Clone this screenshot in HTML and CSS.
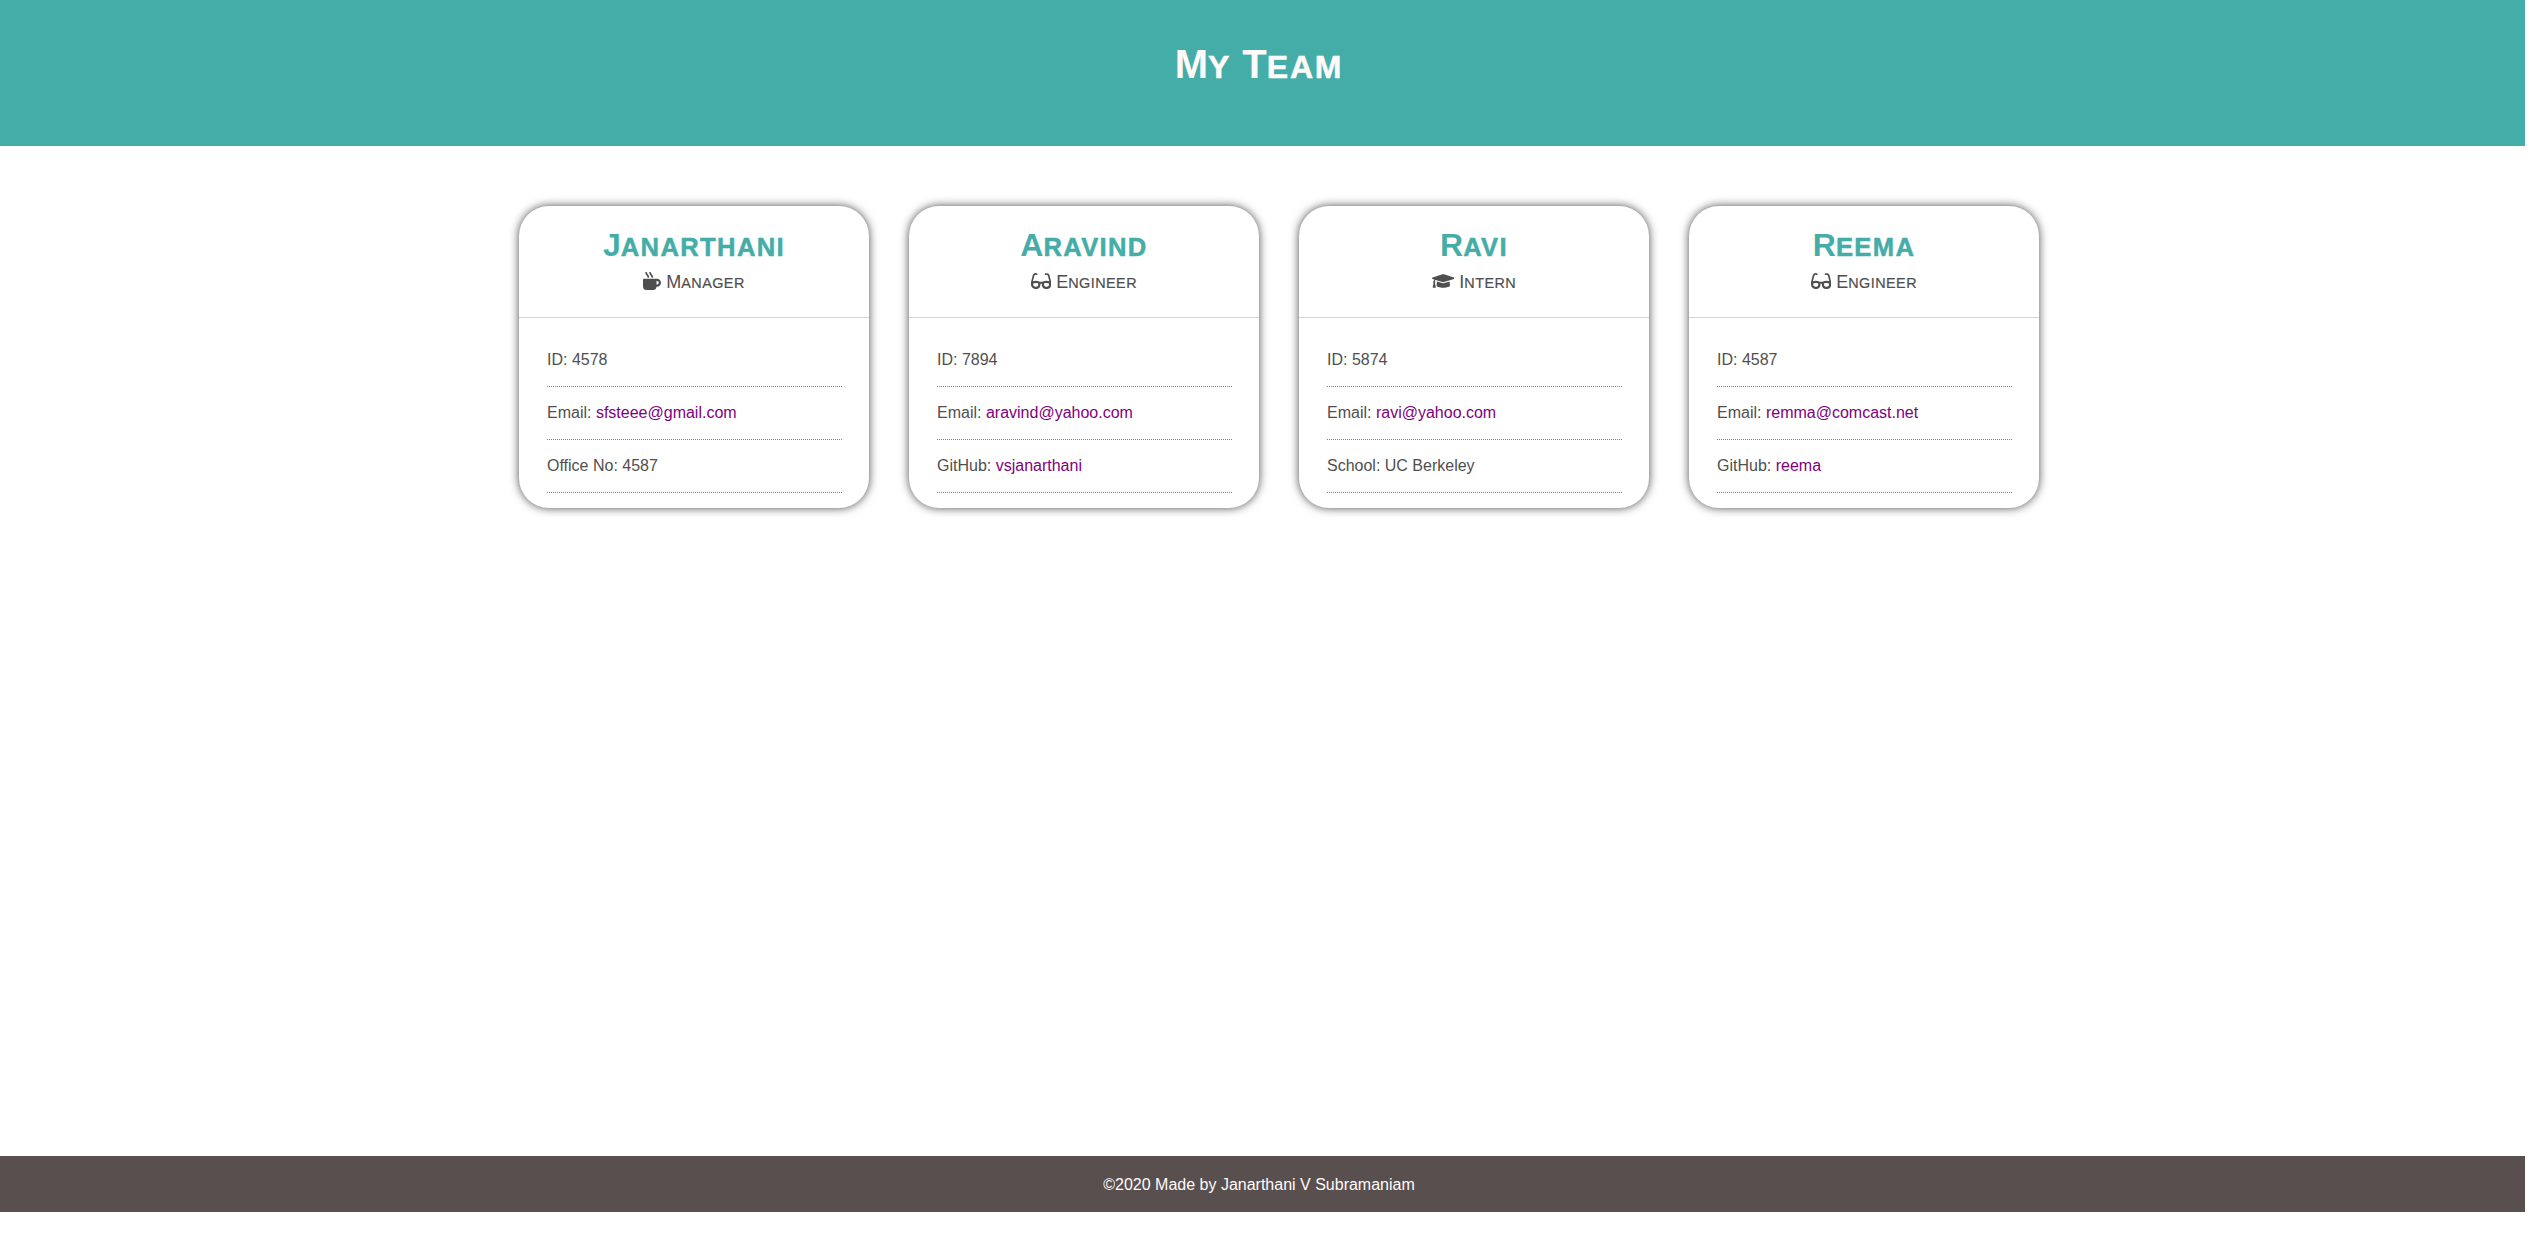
FILE: index.html
```html
<!DOCTYPE html>
<html lang="en">
<head>
<meta charset="utf-8">
<title>My Team</title>
<link rel="stylesheet" href="styles.css">
</head>
<body>
<svg class="sprite" aria-hidden="true">
  <symbol id="mug" viewBox="0 0 512 512"><path d="M127.1 146.5c1.3 7.7 8 13.5 16 13.5h16.5c9.8 0 17.6-8.5 16.3-18-3.8-28.2-16.4-54.2-36.6-74.7-14.4-14.7-23.6-33.3-26.4-53.5C111.8 5.9 105 0 96.8 0H80.4C70.6 0 63 8.5 64.1 18c3.9 31.9 18 61.3 40.6 84.4 12 12.2 19.7 27.5 22.4 44.1zm112 0c1.3 7.7 8 13.5 16 13.5h16.5c9.8 0 17.6-8.5 16.3-18-3.8-28.2-16.4-54.2-36.6-74.7-14.4-14.7-23.6-33.3-26.4-53.5C223.8 5.9 217 0 208.8 0h-16.4c-9.8 0-17.5 8.5-16.3 18 3.9 31.9 18 61.3 40.6 84.4 12 12.2 19.7 27.5 22.4 44.1zM400 192H32c-17.7 0-32 14.3-32 32v192c0 53 43 96 96 96h192c53 0 96-43 96-96h16c61.8 0 112-50.2 112-112s-50.2-112-112-112zm0 160h-16v-96h16c26.5 0 48 21.5 48 48s-21.5 48-48 48z"/></symbol>
  <symbol id="glasses" viewBox="0 0 576 512"><path d="M574.1 280.37L528.75 98.66c-5.91-23.7-21.59-44.05-43-55.81-21.44-11.73-46.97-14.11-70.19-6.33l-15.25 5.08c-8.39 2.79-12.92 11.86-10.12 20.24l5.06 15.18c2.79 8.38 11.85 12.91 20.23 10.12l13.18-4.39c10.87-3.62 23-3.57 33.16 1.73 10.29 5.37 17.57 14.56 20.37 25.82l38.46 153.82c-22.19-6.81-49.79-12.46-81.2-12.46-34.77 0-73.98 7.02-114.85 26.74h-73.18c-40.87-19.74-80.08-26.75-114.86-26.75-31.42 0-59.02 5.65-81.21 12.46l38.46-153.83c2.79-11.25 10.09-20.45 20.38-25.81 10.16-5.3 22.28-5.35 33.15-1.73l13.17 4.39c8.38 2.79 17.44-1.74 20.23-10.12l5.06-15.18c2.8-8.38-1.73-17.45-10.12-20.24l-15.25-5.08c-23.22-7.78-48.75-5.41-70.19 6.33-21.41 11.77-37.09 32.11-43 55.8L1.9 280.37A64.218 64.218 0 0 0 0 295.86v70.25C0 429.01 51.58 480 115.2 480h37.12c60.28 0 110.37-45.94 114.88-105.37l2.93-38.63h35.75l2.93 38.63C313.31 434.06 363.4 480 423.68 480h37.12c63.62 0 115.2-50.99 115.2-113.88v-70.25c0-5.23-.64-10.43-1.9-15.5zm-370.72 89.42c-1.97 25.91-24.4 46.21-51.06 46.21H115.2C86.97 416 64 393.62 64 366.11v-37.54c18.12-6.49 43.42-12.92 72.58-12.92 23.86 0 47.26 4.33 69.93 12.92l-3.13 41.22zM512 366.12c0 27.51-22.97 49.88-51.2 49.88h-37.12c-26.67 0-49.1-20.3-51.06-46.21l-3.13-41.22c22.67-8.59 46.08-12.92 69.95-12.92 29.12 0 54.43 6.44 72.55 12.93v37.54z"/></symbol>
  <symbol id="cap" viewBox="0 0 640 512"><path d="M622.34 153.2L343.4 67.5c-15.2-4.67-31.6-4.67-46.79 0L17.66 153.2c-23.54 7.23-23.54 38.36 0 45.59l48.63 14.94c-10.67 13.19-17.23 29.28-17.88 46.9C38.78 266.15 32 276.11 32 288c0 10.78 5.68 19.85 13.86 25.65L20.33 428.53C18.11 438.52 25.71 448 35.94 448h56.11c10.24 0 17.84-9.48 15.62-19.47L82.14 313.65C90.32 307.85 96 298.78 96 288c0-11.57-6.47-21.25-15.66-26.87.76-15.02 8.44-28.3 20.69-36.72L296.6 284.5c9.06 2.78 26.44 6.25 46.79 0l278.95-85.7c23.55-7.24 23.55-38.36 0-45.6zM352.79 315.09c-28.53 8.76-52.84 3.92-65.59 0l-145.02-44.55L128 384c0 35.35 85.96 64 192 64s192-28.65 192-64l-14.18-113.47-145.03 44.56z"/></symbol>
</svg>
<div class="page">
  <header class="header"><h1 class="title">M<span class="sc">y</span> T<span class="sc">eam</span></h1></header>
  <main class="team">
    <section class="card">
      <div class="card-head">
        <h2 class="name">J<span class="sc">anarthani</span></h2>
        <p class="role"><svg class="icon icon-mug"><use href="#mug"/></svg> M<span class="sc">anager</span></p>
      </div>
      <ul class="details">
        <li class="detail">ID: 4578</li>
        <li class="detail">Email: <a class="link" href="mailto:sfsteee@gmail.com">sfsteee@gmail.com</a></li>
        <li class="detail">Office No: 4587</li>
      </ul>
    </section>
    <section class="card">
      <div class="card-head">
        <h2 class="name">A<span class="sc">ravind</span></h2>
        <p class="role"><svg class="icon icon-glasses"><use href="#glasses"/></svg> E<span class="sc">ngineer</span></p>
      </div>
      <ul class="details">
        <li class="detail">ID: 7894</li>
        <li class="detail">Email: <a class="link" href="mailto:aravind@yahoo.com">aravind@yahoo.com</a></li>
        <li class="detail">GitHub: <a class="link" href="#">vsjanarthani</a></li>
      </ul>
    </section>
    <section class="card">
      <div class="card-head">
        <h2 class="name">R<span class="sc">avi</span></h2>
        <p class="role"><svg class="icon icon-cap"><use href="#cap"/></svg> I<span class="sc">ntern</span></p>
      </div>
      <ul class="details">
        <li class="detail">ID: 5874</li>
        <li class="detail">Email: <a class="link" href="mailto:ravi@yahoo.com">ravi@yahoo.com</a></li>
        <li class="detail">School: UC Berkeley</li>
      </ul>
    </section>
    <section class="card">
      <div class="card-head">
        <h2 class="name">R<span class="sc">eema</span></h2>
        <p class="role"><svg class="icon icon-glasses"><use href="#glasses"/></svg> E<span class="sc">ngineer</span></p>
      </div>
      <ul class="details">
        <li class="detail">ID: 4587</li>
        <li class="detail">Email: <a class="link" href="mailto:remma@comcast.net">remma@comcast.net</a></li>
        <li class="detail">GitHub: <a class="link" href="#">reema</a></li>
      </ul>
    </section>
  </main>
  <footer class="footer">©2020 Made by Janarthani V Subramaniam</footer>
</div>
</body>
</html>
```
FILE: styles.css
```css
* { box-sizing: border-box; margin: 0; padding: 0; }
html { background: #fff; }
body {
  font: 16px/20px "Liberation Sans", Arial, sans-serif;
  color: #4f4f4f;
}
.sprite { display: none; }
.page {
  display: flex;
  flex-direction: column;
  width: 2525px;
  height: 1212px;
}
.header {
  height: 146px;
  padding: 40px 7px 0 0;
  background: #45ada8;
  text-align: center;
}
.title {
  font-size: 40px;
  line-height: 48px;
  color: #fffafa;
}
/* small capitals, slightly taller and heavier than the synthesized ones */
.sc {
  font-size: .8em;
  text-transform: uppercase;
  -webkit-text-stroke: .5px currentColor;
}
.title .sc { letter-spacing: 1.8px; }
.name .sc { letter-spacing: 1.35px; }
.role .sc {
  letter-spacing: .45px;
  -webkit-text-stroke-width: .2px;
}
.team {
  flex: 1;
  display: flex;
  gap: 40px;
  align-items: flex-start;
  padding: 60px 0 0 519px;
}
.card {
  width: 350px;
  height: 302px;
  border-radius: 30px;
  background: #fff;
  box-shadow: 0 0 10px rgba(0, 0, 0, .7);
}
.card-head {
  height: 112px;
  padding-top: 20px;
  border-bottom: 1px solid #d3d3d3;
  text-align: center;
}
.name {
  font-size: 32px;
  line-height: 38px;
  color: #45ada8;
}
.role {
  font-size: 18px;
  line-height: 32px;
}
.icon {
  height: 18px;
  fill: currentColor;
  vertical-align: -2px;
}
.icon-mug { width: 18px; }
.icon-glasses { width: 20.25px; }
.icon-cap { width: 22.5px; }
.details {
  list-style: none;
  padding: 16px 27px 0 28px;
}
.detail {
  height: 53px;
  padding-top: 16px;
  border-bottom: 1px dotted #808080;
}
.link { color: #800080; text-decoration: none; }
.footer {
  height: 56px;
  padding-right: 7px;
  background: #594f4f;
  color: #fffafa;
  line-height: 58px;
  text-align: center;
}
```
